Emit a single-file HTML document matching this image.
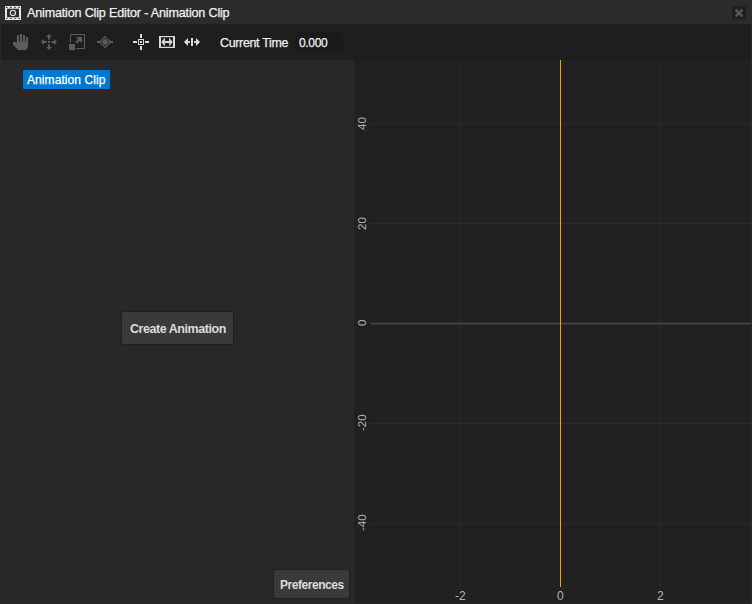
<!DOCTYPE html>
<html><head><meta charset="utf-8">
<style>
*{box-sizing:border-box;margin:0;padding:0}
html,body{width:752px;height:604px;overflow:hidden;background:#282828;font-family:"Liberation Sans",sans-serif}
.abs{position:absolute}
#ttext,#ctlabel,#ctval,#seltext{-webkit-text-stroke:0.25px currentColor}
#title{left:0;top:0;width:752px;height:24px;background:#2b2b2b}
#ttext{left:27px;top:5.6px;font-size:12.6px;letter-spacing:-0.18px;color:#f2f2f2;white-space:nowrap;line-height:14px}
#close{left:732px;top:6px;width:14px;height:13px;background:#1f1f1f}
#toolbar{left:1px;top:24px;width:750px;height:36px;background:#1e1e1e}
#selbox{left:36px;top:30px;width:25px;height:23px;border:1px solid #1d1d1d;background:#1e1e1e}
#ctlabel{left:220px;top:35.6px;font-size:12.4px;letter-spacing:-0.3px;color:#f0f0f0;white-space:nowrap;line-height:14px}
#ctbox{left:295px;top:32px;width:48px;height:19px;background:#1a1a1a;border-radius:3px}
#ctval{left:299px;top:36px;font-size:12px;letter-spacing:-0.35px;color:#f0f0f0;white-space:nowrap;line-height:14px}
#left{left:0;top:60px;width:354px;height:544px;background:#282828}
#sel{left:23px;top:70px;width:87px;height:19px;background:#0078d0;border-radius:1px}
#seltext{left:27px;top:73px;font-size:12px;letter-spacing:0.08px;color:#fff;white-space:nowrap;line-height:14px}
.btn{background:#3a3a3a;border:1px solid #1f1f1f;border-radius:3px;color:#d8d8d8;font-weight:bold;white-space:nowrap}
#create{left:121px;top:311px;width:113px;height:34px}
#createt{left:130px;top:322px;font-size:12.5px;letter-spacing:-0.45px;line-height:14px;color:#dcdcdc;font-weight:bold;white-space:nowrap}
#pref{left:273px;top:569px;width:77px;height:30px}
#preft{left:280px;top:578px;font-size:12px;letter-spacing:-0.45px;line-height:14px;color:#dcdcdc;font-weight:bold;white-space:nowrap}
#graph{left:354px;top:60px;width:397px;height:543px;background:#212121}
.ylab{font-size:11.5px;color:#b4b4b4;white-space:nowrap;line-height:14px;transform:rotate(-90deg);transform-origin:0 0}
.xlab{font-size:12px;color:#b4b4b4;white-space:nowrap;line-height:14px}
</style></head>
<body>
<div id="title" class="abs"></div>
<svg class="abs" style="left:0;top:0" width="24" height="24" viewBox="0 0 24 24">
  <path fill="#e6e6e6" fill-rule="evenodd" d="M5 6 H21 V20 H5 Z M7 8.7 V17.3 H19 V8.7 Z"/>
  <g fill="#2b2b2b">
   <rect x="5.9" y="6.7" width="1.6" height="1.2" rx="0.5"/><rect x="10" y="6.7" width="1.6" height="1.2" rx="0.5"/><rect x="14.1" y="6.7" width="1.6" height="1.2" rx="0.5"/><rect x="18.3" y="6.7" width="1.6" height="1.2" rx="0.5"/>
   <rect x="5.9" y="17.9" width="1.6" height="1.2" rx="0.5"/><rect x="10" y="17.9" width="1.6" height="1.2" rx="0.5"/><rect x="14.1" y="17.9" width="1.6" height="1.2" rx="0.5"/><rect x="18.3" y="17.9" width="1.6" height="1.2" rx="0.5"/>
  </g>
  <circle cx="12.9" cy="12.9" r="2.6" fill="none" stroke="#e6e6e6" stroke-width="1.1"/>
  <circle cx="12.9" cy="12.9" r="0.9" fill="#555"/>
</svg>
<div id="ttext" class="abs">Animation Clip Editor - Animation Clip</div>
<div id="close" class="abs"></div>
<svg class="abs" style="left:732px;top:6px" width="14" height="13" viewBox="0 0 14 13">
  <path d="M3.6 3.7 L10.4 10.5 M10.4 3.7 L3.6 10.5" stroke="#585858" stroke-width="2.4"/>
</svg>

<div id="toolbar" class="abs"></div>
<div id="selbox" class="abs"></div>
<!-- hand -->
<svg class="abs" style="left:13px;top:34px" width="16" height="16" viewBox="0 0 16 16" fill="#5c5c5c">
  <rect x="4" y="1" width="2" height="8"/><rect x="7" y="0" width="2" height="8"/><rect x="10" y="1" width="2" height="8"/><rect x="13" y="3" width="2" height="6"/>
  <path d="M0 8.2 L0.3 8 H3 L4 9 V7.5 H15 V13 L13 16 H5 L0 10.6 Z"/>
</svg>
<!-- move -->
<svg class="abs" style="left:41px;top:34px" width="16" height="16" viewBox="0 0 16 16" fill="#5c5c5c">
  <path d="M8 0 L11 3 H5 Z M8 16 L11 13 H5 Z M0 8 L3 5 V11 Z M16 8 L13 5 V11 Z"/>
  <rect x="7" y="3" width="2" height="2.6"/><rect x="7" y="10.4" width="2" height="2.6"/>
  <rect x="3" y="7" width="2.6" height="2"/><rect x="10.4" y="7" width="2.6" height="2"/>
  <rect x="7" y="7" width="2" height="2"/>
</svg>
<!-- scale -->
<svg class="abs" style="left:69px;top:34px" width="16" height="16" viewBox="0 0 16 16" fill="#5c5c5c">
  <path d="M1.5 9 V0.5 H15.5 V14.5 H7" fill="none" stroke="#5c5c5c" stroke-width="1"/>
  <rect x="0" y="10" width="6" height="6"/>
  <path d="M7 3 H13 V9 Z"/>
  <path d="M7.2 8.6 L10.8 5" stroke="#5c5c5c" stroke-width="2.4"/>
</svg>
<!-- diamond -->
<svg class="abs" style="left:97px;top:34px" width="16" height="16" viewBox="0 0 16 16" fill="#5c5c5c">
  <rect x="0" y="7" width="3.6" height="2"/><rect x="12.4" y="7" width="3.6" height="2"/>
  <path d="M8 2.6 L13.4 8 L8 13.4 L2.6 8 Z" fill="none" stroke="#5c5c5c" stroke-width="1.3"/>
  <path d="M8 4.5 L11.5 8 L8 11.5 L4.5 8 Z"/>
</svg>
<!-- crosshair -->
<svg class="abs" style="left:133px;top:34px" width="16" height="16" viewBox="0 0 16 16" fill="#dadada">
  <rect x="7" y="0" width="2" height="4"/><rect x="7" y="12" width="2" height="4"/>
  <rect x="0" y="7" width="4" height="2"/><rect x="12" y="7" width="4" height="2"/>
  <rect x="5.5" y="5.5" width="5" height="5" fill="none" stroke="#dadada" stroke-width="1"/>
  <rect x="7" y="7" width="2" height="2"/>
</svg>
<!-- fit -->
<svg class="abs" style="left:159px;top:34px" width="16" height="16" viewBox="0 0 16 16" fill="#dadada">
  <rect x="0" y="2" width="2" height="12"/><rect x="14" y="2" width="2" height="12"/>
  <rect x="0" y="2" width="16" height="1.2"/><rect x="0" y="12.8" width="16" height="1.2"/>
  <path d="M2.2 8 L5.9 3.8 V12.2 Z M13.8 8 L10.1 3.8 V12.2 Z"/>
  <rect x="5.5" y="7" width="5" height="2"/>
</svg>
<!-- spread -->
<svg class="abs" style="left:184px;top:34px" width="16" height="16" viewBox="0 0 16 16" fill="#dadada">
  <path d="M0 8 L4 4 V12 Z M16 8 L12 4 V12 Z"/>
  <rect x="3.8" y="7" width="2" height="2"/><rect x="10.2" y="7" width="2" height="2"/>
  <rect x="7" y="4" width="2" height="8"/>
</svg>
<div id="ctlabel" class="abs">Current Time</div>
<div id="ctbox" class="abs"></div>
<div id="ctval" class="abs">0.000</div>

<div id="left" class="abs"></div>
<div id="sel" class="abs"></div>
<div id="seltext" class="abs">Animation Clip</div>
<div id="create" class="abs btn"></div>
<div id="createt" class="abs">Create Animation</div>
<div id="pref" class="abs btn"></div>
<div id="preft" class="abs">Preferences</div>

<div id="graph" class="abs"></div>
<svg class="abs" style="left:354px;top:60px" width="397" height="542" viewBox="354 60 397 542">
  <g fill="#2a2a2a">
    <rect x="370" y="123" width="382" height="1"/>
    <rect x="370" y="223" width="382" height="1"/>
    <rect x="370" y="423" width="382" height="1"/>
    <rect x="370" y="523" width="382" height="1"/>
    <rect x="460" y="60" width="1" height="527"/>
    <rect x="660" y="60" width="1" height="527"/>
  </g>
  <rect x="370" y="322.6" width="381" height="2" fill="#424242"/>
  <rect x="560" y="60" width="1" height="527" fill="#f8a400"/>
</svg>
<div class="abs ylab" style="left:355px;top:130px">40</div>
<div class="abs ylab" style="left:355px;top:230px">20</div>
<div class="abs ylab" style="left:355px;top:326px">0</div>
<div class="abs ylab" style="left:355px;top:431px">-20</div>
<div class="abs ylab" style="left:355px;top:531px">-40</div>
<div class="abs xlab" style="left:455px;top:589px">-2</div>
<div class="abs xlab" style="left:557px;top:589px">0</div>
<div class="abs xlab" style="left:657px;top:589px">2</div>
</body></html>
